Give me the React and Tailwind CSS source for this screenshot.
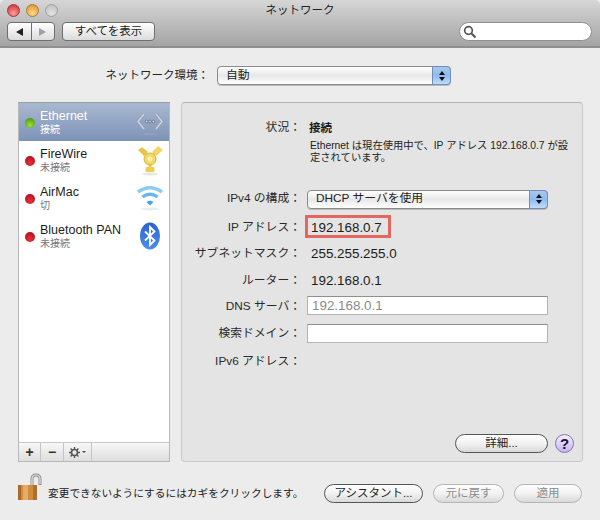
const sans = "font-['Liberation_Sans','Noto_Sans_CJK_JP',sans-serif]";

function Light({ className }) {
  return <span className={"block w-[13px] h-[13px] rounded-full border " + className} />;
}

function Stepper() {
  return (
    <span className="w-[19px] self-stretch -my-px -mr-px rounded-r-[4px] border border-[#6f8fb8] bg-gradient-to-b from-[#a9c7ee] via-[#8ebbf0] to-[#c0dcf9] flex flex-col items-center justify-center gap-[2px]">
      <span className="w-0 h-0 border-x-[3px] border-x-transparent border-b-[4px] border-b-[#111]" />
      <span className="w-0 h-0 border-x-[3px] border-x-transparent border-t-[4px] border-t-[#111]" />
    </span>
  );
}

function Select({ width, children }) {
  return (
    <div className={"h-[19px] flex items-center rounded-[4px] border border-[#8a8a8a] bg-gradient-to-b from-white via-[#e8e8e8] to-white text-[11.8px] text-[#222] shadow-[0_1px_0_#bbb] " + width}>
      <span className="flex-1 pl-2 leading-none">{children}</span>
      <Stepper />
    </div>
  );
}

function EthernetIcon() {
  return (
    <svg width="28" height="26" viewBox="0 0 28 26" fill="none">
      <path d="M8 5 L2 12.5 L8 20 M20 5 L26 12.5 L20 20" stroke="#8f9db3" strokeWidth="3.4" />
      <path d="M8 5 L2 12.5 L8 20 M20 5 L26 12.5 L20 20" stroke="#c9d2e0" strokeWidth="1.6" />
      <circle cx="10.5" cy="12.5" r="1.4" fill="#c9d2e0" stroke="#55657e" strokeWidth="0.7" />
      <circle cx="14" cy="12.5" r="1.4" fill="#c9d2e0" stroke="#55657e" strokeWidth="0.7" />
      <circle cx="17.5" cy="12.5" r="1.4" fill="#c9d2e0" stroke="#55657e" strokeWidth="0.7" />
      <path d="M8 25 H20" stroke="#9aa8bc" strokeWidth="1.2" />
    </svg>
  );
}

function FireWireIcon() {
  return (
    <svg width="28" height="32" viewBox="0 0 28 32" fill="none">
      <path d="M8 8 L14 14 M20 8 L14 14 M14 14 V25" stroke="#eccd58" strokeWidth="3" />
      <path d="M2 6 L6 3 L12 8 L8 12 Z" fill="#e8c44a" />
      <path d="M16 8 L22 2 L27 6 L20 12 Z" fill="#f2d564" />
      <circle cx="14" cy="15" r="6" fill="#f4d964" stroke="#d8b33a" />
      <circle cx="14" cy="15" r="2.5" fill="#fff3b0" />
      <rect x="9.5" y="23" width="9" height="5" rx="1" fill="#eccd58" />
      <ellipse cx="14" cy="30" rx="8" ry="1.5" fill="#e8e8da" />
    </svg>
  );
}

function WifiIcon() {
  return (
    <svg width="28" height="26" viewBox="0 0 28 26" fill="none">
      <path d="M2 7 Q14 -1.5 26 7" stroke="#8ccbf2" strokeWidth="3.6" />
      <path d="M6.5 12 Q14 6.5 21.5 12" stroke="#66b6ee" strokeWidth="3.4" />
      <path d="M10.5 17 L14 20.5 L17.5 17 Q14 14.5 10.5 17 Z" fill="#45a0e4" />
      <ellipse cx="14" cy="24" rx="9" ry="1.5" fill="#e6eef4" />
    </svg>
  );
}

function BluetoothIcon() {
  return (
    <svg width="22" height="29" viewBox="0 0 22 29" fill="none">
      <defs>
        <linearGradient id="bt" x1="0" y1="0" x2="0" y2="1">
          <stop offset="0" stopColor="#2a62d0" />
          <stop offset="1" stopColor="#4b8fec" />
        </linearGradient>
      </defs>
      <ellipse cx="11" cy="14" rx="10" ry="13.5" fill="url(#bt)" />
      <path d="M6 9.5 L15.5 18.5 L11 23 V5 L15.5 9.5 L6 18.5" stroke="#fff" strokeWidth="1.8" />
    </svg>
  );
}

function LockIcon() {
  return (
    <svg width="26" height="30" viewBox="0 0 26 30" fill="none">
      <path d="M15 14 V6 Q15 2 19 2 Q23 2 23 6 V12" stroke="#8d8d8d" strokeWidth="3" />
      <path d="M15 13 V6 Q15 2 19 2 Q23 2 23 6 V11" stroke="#e4e4e4" strokeWidth="1.2" />
      <rect x="1" y="12" width="19" height="15" rx="1.5" fill="#cf8b3e" />
      <rect x="1" y="12" width="3" height="15" fill="#a86a28" />
      <rect x="6" y="12" width="5" height="15" fill="#e8ab66" />
      <rect x="16" y="12" width="4" height="15" fill="#ad6f2b" />
    </svg>
  );
}

function GearIcon() {
  return (
    <svg width="11" height="11" viewBox="0 0 11 11" fill="none">
      <circle cx="5.5" cy="5.5" r="3" stroke="#555" strokeWidth="1.6" />
      <path d="M5.5 0 V2 M5.5 9 V11 M0 5.5 H2 M9 5.5 H11 M1.6 1.6 L3 3 M8 8 L9.4 9.4 M1.6 9.4 L3 8 M8 3 L9.4 1.6" stroke="#555" strokeWidth="1.4" />
    </svg>
  );
}

const services = [
  { name: "Ethernet", status: "接続", dot: "green", icon: <EthernetIcon />, selected: true },
  { name: "FireWire", status: "未接続", dot: "red", icon: <FireWireIcon /> },
  { name: "AirMac", status: "切", dot: "red", icon: <WifiIcon /> },
  { name: "Bluetooth PAN", status: "未接続", dot: "red", icon: <BluetoothIcon /> },
];

function Service({ item }) {
  return (
    <div className={"h-[38px] flex items-center pl-[6px] pr-[4px] " + (item.selected ? "bg-gradient-to-b from-[#a9b8d0] to-[#7d93b7] text-white" : "text-[#1c1c1c]")}>
      <span className={"w-[10px] h-[10px] rounded-full shrink-0 mt-[2px] " + (item.dot === "green"
        ? "bg-[radial-gradient(circle_at_50%_70%,#9be03c,#3f8a0c)]"
        : "bg-[radial-gradient(circle_at_50%_70%,#ec2f3a,#a30a14)]")} />
      <div className="ml-[5px] pt-[1px] flex-1 flex flex-col">
        <span className="text-[12.5px] leading-[14px]">{item.name}</span>
        <span className={"text-[10px] leading-[13px] " + (item.selected ? "text-white" : "text-[#777]")}>{item.status}</span>
      </div>
      <div className="w-[30px] flex justify-center">{item.icon}</div>
    </div>
  );
}

function Row({ label, height, children }) {
  return (
    <div className="flex items-center pt-[2px]" style={{ height }}>
      <div className="w-[119px] text-right text-[11.8px] text-[#2a2a2a] leading-none whitespace-nowrap">{label}：</div>
      <div className="ml-[10px] flex-1 text-[13.4px] text-[#1c1c1c]">{children}</div>
    </div>
  );
}

function PillButton({ children, disabled, className }) {
  return (
    <div className={"h-[19px] rounded-full flex items-center justify-center text-[11.5px] bg-gradient-to-b from-white via-[#f2f2f2] to-[#d9d9d9] border " + (disabled ? "border-[#b5b5b5] text-[#8c8c8c] " : "border-[#555] text-[#222] ") + className}>
      {children}
    </div>
  );
}

export default function App() {
  return (
    <div className={"w-[600px] h-[520px] bg-[#ececec] flex flex-col overflow-hidden " + sans}>
      <div className="h-[48px] shrink-0 border-b-2 border-[#8f8f8f] bg-gradient-to-b from-[#d6d6d6] to-[#a4a4a4] rounded-t-[5px] pt-[4px] px-[7px]">
        <div className="h-[13px] grid grid-cols-3 items-center">
          <div className="flex gap-[6px]">
            <Light className="bg-[radial-gradient(circle_at_50%_75%,#ff9d9d,#c9252e)] border-[#9b3a3f]" />
            <Light className="bg-[radial-gradient(circle_at_50%_75%,#ffd98a,#e18a1f)] border-[#a97a3a]" />
            <Light className="bg-[radial-gradient(circle_at_50%_75%,#e2e2e2,#bcbcbc)] border-[#a0a0a0]" />
          </div>
          <div className="text-center text-[11.5px] text-[#222] leading-none whitespace-nowrap">ネットワーク</div>
        </div>
        <div className="mt-[5px] flex items-center">
          <div className="h-[19px] w-[48px] flex rounded-[4px] border border-[#6f6f6f] bg-gradient-to-b from-white to-[#dcdcdc]">
            <div className="flex-1 flex items-center justify-center border-r border-[#6f6f6f]">
              <span className="w-0 h-0 border-y-[4px] border-y-transparent border-r-[7px] border-r-[#222]" />
            </div>
            <div className="flex-1 flex items-center justify-center">
              <span className="w-0 h-0 border-y-[4px] border-y-transparent border-l-[7px] border-l-[#a0a0a0]" />
            </div>
          </div>
          <div className="ml-[7px] h-[19px] w-[93px] rounded-[4px] border border-[#6f6f6f] bg-gradient-to-b from-white to-[#dcdcdc] flex items-center justify-center text-[11.5px] text-[#222]">すべてを表示</div>
          <div className="ml-auto mr-[1px] h-[19px] w-[133px] rounded-full bg-white border border-[#8f8f8f] flex items-center pl-[3px]">
            <svg width="14" height="14" viewBox="0 0 14 14" fill="none">
              <circle cx="5.5" cy="5.5" r="3.8" stroke="#555" strokeWidth="1.7" />
              <path d="M8.5 8.5 L12.5 12.5" stroke="#555" strokeWidth="2.2" />
            </svg>
          </div>
        </div>
      </div>

      <div className="mt-[18px] h-[19px] flex items-center">
        <div className="w-[209px] text-right text-[11.5px] text-[#222] whitespace-nowrap">ネットワーク環境：</div>
        <div className="ml-[8px]"><Select width="w-[234px]">自動</Select></div>
      </div>

      <div className="mt-[17px] pl-[18px] flex gap-[11px] h-[360px]">
        <div className="w-[152px] shrink-0 border border-[#b8b8b8] border-t-[#9d9d9d] bg-white flex flex-col">
          <div className="flex-1">
            {services.map((s) => <Service key={s.name} item={s} />)}
          </div>
          <div className="h-[19px] border-t border-[#c8c8c8] bg-gradient-to-b from-[#f8f8f8] to-[#dedede] flex text-[#333]">
            <div className="w-[22px] border-r border-[#c4c4c4] flex items-center justify-center text-[14px] font-bold leading-none">+</div>
            <div className="w-[23px] border-r border-[#c4c4c4] flex items-center justify-center text-[14px] font-bold leading-none">−</div>
            <div className="w-[28px] border-r border-[#c4c4c4] flex items-center justify-center gap-[2px]">
              <GearIcon />
              <span className="w-0 h-0 border-x-[2px] border-x-transparent border-t-[2px] border-t-[#444]" />
            </div>
          </div>
        </div>

        <div className="w-[402px] shrink-0 rounded-[4px] border border-[#c9c9c9] border-t-[#b5b5b5] bg-[#e4e4e4] pt-[14px] flex flex-col">
          <Row label="状況" height="20px"><span className="-ml-[2px] font-bold text-[11.5px]">接続</span></Row>
          <div className="ml-[128px] mt-[3px] w-[262px] text-[10.3px] leading-[12px] text-[#222]">
            Ethernet は現在使用中で、IP アドレス 192.168.0.7 が設定されています。
          </div>
          <div className="mt-[23px]" />
          <Row label="IPv4 の構成" height="22px"><div className="-ml-[4px]"><Select width="w-[241px]">DHCP サーバを使用</Select></div></Row>
          <div className="mt-[7px]" />
          <Row label="IP アドレス" height="22px">
            <div className="-ml-[6px] -mt-[3px] h-[23px] w-[86px] border-[3px] border-[#e0685f] pl-[3px] leading-[19px]">192.168.0.7</div>
          </Row>
          <Row label="サブネットマスク" height="30px">255.255.255.0</Row>
          <Row label="ルーター" height="24px">192.168.0.1</Row>
          <Row label="DNS サーバ" height="28px">
            <div className="-ml-[4px] -mt-[4px] h-[19px] w-[241px] bg-white border border-[#b4b4b4] border-t-[#8f8f8f] pl-[4px] leading-[18px] text-[#8a8a8a]">192.168.0.1</div>
          </Row>
          <Row label="検索ドメイン" height="26px">
            <div className="-ml-[4px] -mt-[2px] h-[19px] w-[241px] bg-white border border-[#b4b4b4] border-t-[#8f8f8f]" />
          </Row>
          <Row label="IPv6 アドレス" height="30px" />
          <div className="mt-auto mb-[8px] flex items-center justify-end pr-[8px] gap-[7px]">
            <PillButton className="w-[93px]">詳細...</PillButton>
            <div className="w-[19px] h-[19px] rounded-full border-[1.5px] border-[#8472b4] bg-gradient-to-b from-[#f5f0ff] to-[#c8b5f0] flex items-center justify-center text-[15px] font-bold text-[#1c1040] leading-none">?</div>
          </div>
        </div>
      </div>

      <div className="mt-[11px] pl-[17px] pr-[18px] flex items-center">
        <LockIcon />
        <span className="ml-[5px] mt-[10px] text-[10.7px] text-[#222] whitespace-nowrap">変更できないようにするにはカギをクリックします。</span>
        <div className="ml-auto flex gap-[10px] mt-[11px]">
          <PillButton className="w-[99px] border-[1.5px]">アシスタント...</PillButton>
          <PillButton disabled className="w-[71px]">元に戻す</PillButton>
          <PillButton disabled className="w-[68px]">適用</PillButton>
        </div>
      </div>
    </div>
  );
}
